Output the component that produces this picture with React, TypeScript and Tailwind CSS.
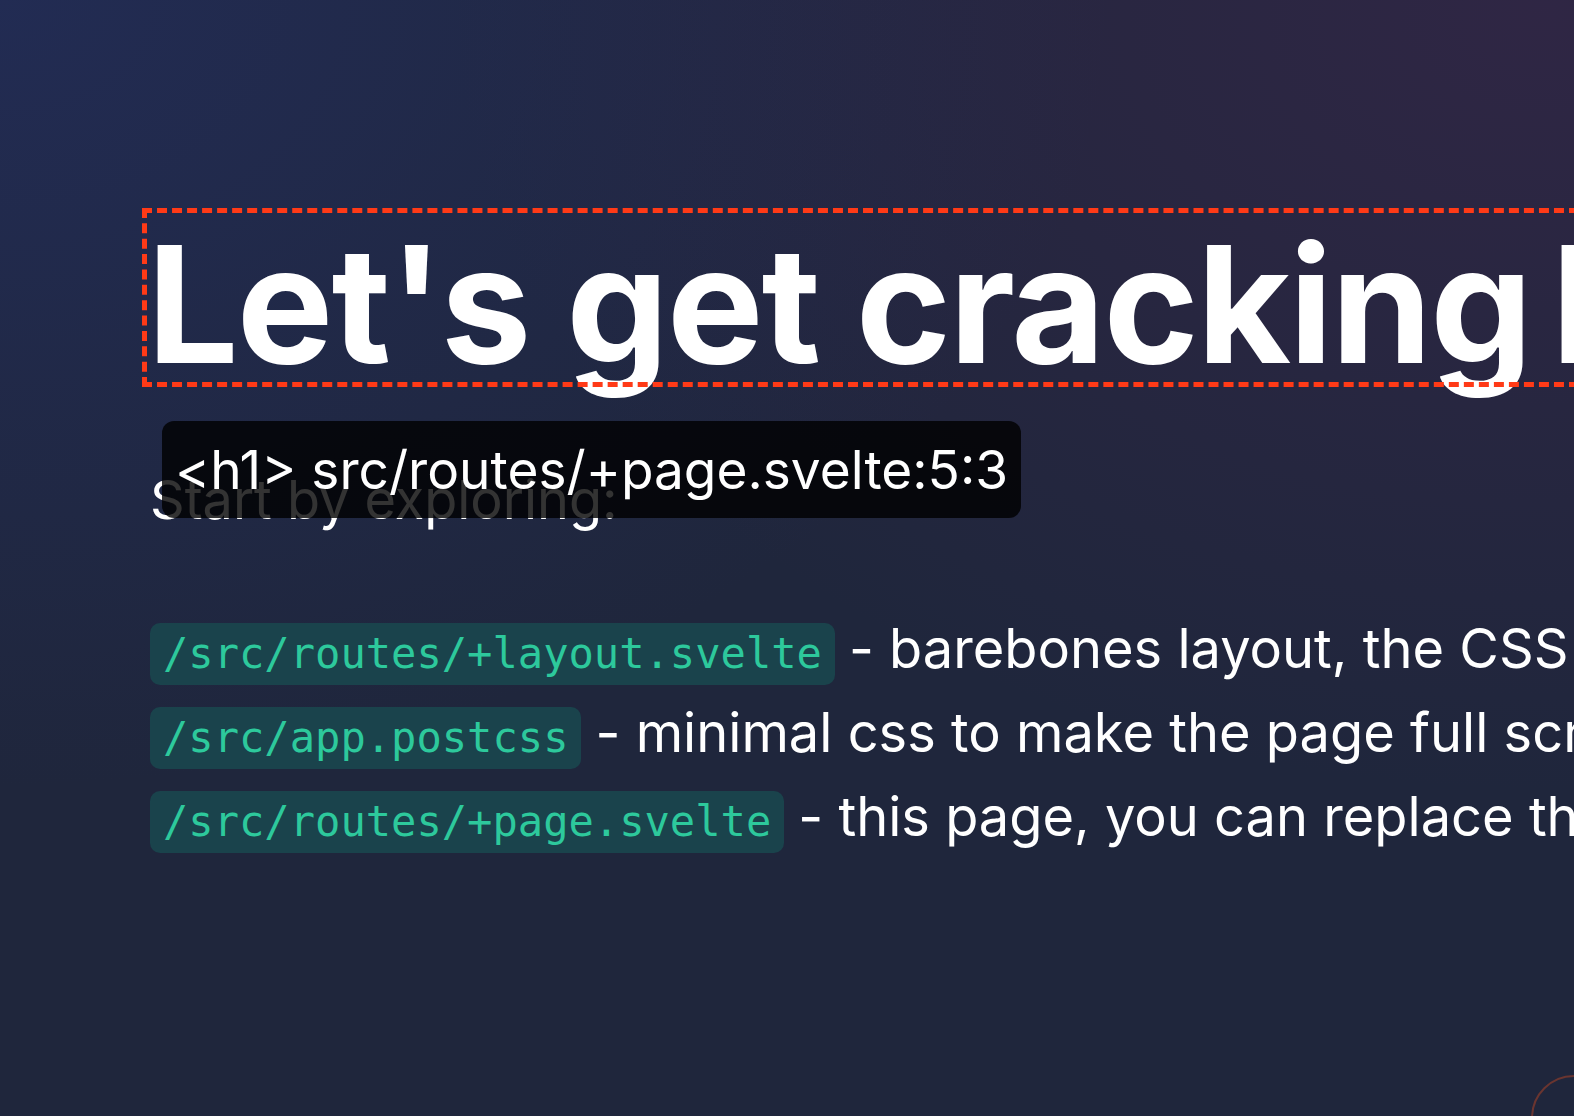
export default function App() {
  const items = [
    { path: "/src/routes/+layout.svelte", text: "- barebones layout, the CSS import order is critical!" },
    { path: "/src/app.postcss", text: "- minimal css to make the page full screen, may not be relevant for your project" },
    { path: "/src/routes/+page.svelte", text: "- this page, you can replace the contents" },
  ];

  return (
    <div
      className="relative h-[1116px] w-full overflow-hidden bg-[#1f263c] bg-[radial-gradient(at_0%_0%,rgba(40,55,130,0.33)_0px,transparent_50%),radial-gradient(at_98%_1%,rgba(80,38,85,0.33)_0px,transparent_50%)] text-white"
      style={{ fontFamily: "Inter, 'Noto Sans', sans-serif" }}
    >
      <div className="relative pl-[147px] pt-[213px] whitespace-nowrap">
        <h1 className="h-[169px] pt-[13px] text-[162px] font-bold leading-[156px] tracking-[-1.8px] outline-[5px] outline-dashed outline-[#ff3a17]">
          Let's get cracking <span className="-ml-[16px]">bones!</span>
        </h1>

        <p className="mt-[88px] pl-[3px] text-[54px] leading-[60px]">Start by exploring:</p>

        <ul className="mt-[82px] pl-[3px]">
          {items.map((item) => (
            <li key={item.path} className="flex h-[84px] items-center gap-[14px] text-[54.2px]">
              <code
                className="flex h-[62px] items-center rounded-[10px] bg-[#1a434c] px-[13px] text-[42.1px] text-[#2dc99c]"
                style={{ fontFamily: "'DejaVu Sans Mono', monospace" }}
              >
                {item.path}
              </code>
              <span className="mb-[10px]">{item.text}</span>
            </li>
          ))}
        </ul>

        {/* inspector tooltip */}
        <div className="absolute left-[162px] top-[421px] flex h-[97px] w-[859px] items-center rounded-[12px] bg-black/80 pl-[13px] text-[53.2px] text-white">
          &lt;h1&gt; src/routes/+page.svelte:5:3
        </div>
      </div>

      {/* inspector toggle */}
      <div className="absolute -bottom-[45px] -right-[43px] h-[86px] w-[86px] rounded-full border-2 border-[#6a3530]" />
    </div>
  );
}
